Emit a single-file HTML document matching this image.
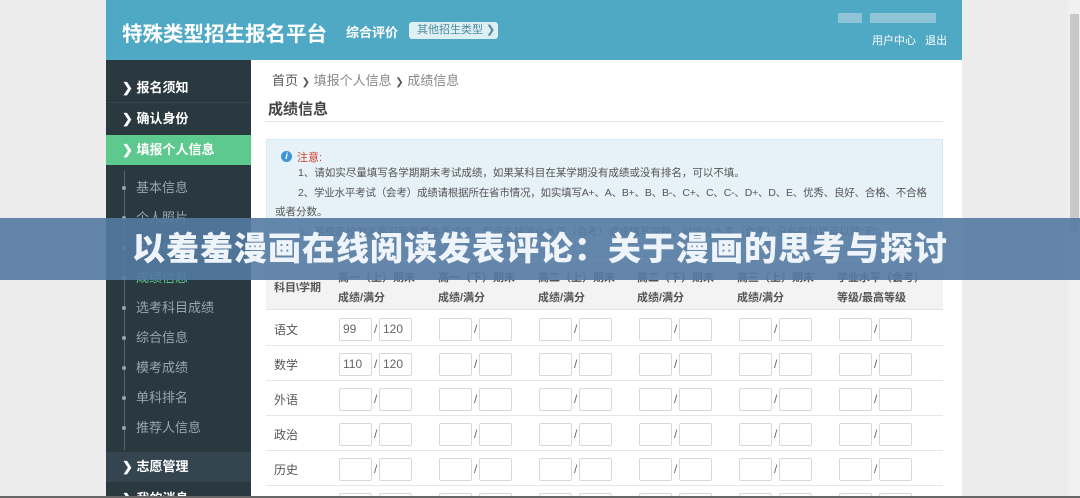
<!DOCTYPE html>
<html style="height:498px;overflow:hidden"><head><meta charset="utf-8"><style>
*{margin:0;padding:0;box-sizing:border-box}
body{width:1080px;height:498px;overflow:hidden;background:#ececec;font-family:"Liberation Sans","Noto Sans CJK SC",sans-serif;position:relative;color:#555}
.a{position:absolute}
.hdr{left:106px;top:0;width:856px;height:60px;background:#4fa9c4}
.side{left:106px;top:60px;width:145px;height:438px;background:#2a3840}
.main{left:251px;top:60px;width:711px;height:438px;background:#fff}
.nav{left:106px;width:145px;height:30px;color:#fff;font-weight:bold;font-size:13px;line-height:30px;padding-left:16px}
.sub{left:106px;width:145px;color:#9aa6ad;font-size:13px;line-height:20px;padding-left:30px}
.dot{position:absolute;left:16px;top:8px;width:4px;height:4px;border-radius:2px;background:#9aa6ad}
.inp{position:absolute;width:33px;height:23px;border:1px solid #d8d8d8;border-radius:2px;background:#fff;font-size:12px;line-height:21px;padding-left:3px;color:#666}
.sl{position:absolute;font-size:12px;color:#666}
.th{position:absolute;font-size:11px;font-weight:bold;color:#555;line-height:20px}
.rowl{position:absolute;left:274px;font-size:12px;color:#555}
</style></head><body>
<div class="a hdr"></div>
<div class="a" style="left:122px;top:17px;color:#fff;font-size:20.5px;font-weight:bold;white-space:nowrap">特殊类型招生报名平台</div>
<div class="a" style="left:346px;top:22px;color:#fff;font-size:13px;font-weight:bold">综合评价</div>
<div class="a" style="left:409px;top:22px;width:89px;height:17px;background:#dff0f5;border-radius:3px;font-size:11px;color:#4a8aa0;line-height:17px;padding-left:8px;white-space:nowrap">其他招生类型 ❯</div>
<div class="a" style="left:838px;top:13px;width:24px;height:10px;background:#8fc4d6"></div>
<div class="a" style="left:870px;top:13px;width:66px;height:10px;background:#8fc4d6"></div>
<div class="a" style="left:872px;top:32px;color:#fff;font-size:11px">用户中心&nbsp;&nbsp;&nbsp;退出</div>

<div class="a side"></div>
<div class="a nav" style="top:73px;border-bottom:1px solid #344650">❯ 报名须知</div>
<div class="a nav" style="top:104px">❯ 确认身份</div>
<div class="a nav" style="top:135px;background:#5ec98e">❯ 填报个人信息</div>
<div class="a" style="left:124px;top:170px;width:1px;height:280px;background:#55636b"></div>
<div class="a sub" style="top:178px"><i class="dot"></i>基本信息</div>
<div class="a sub" style="top:208px"><i class="dot"></i>个人照片</div>
<div class="a sub" style="top:238px"><i class="dot"></i>户籍信息</div>
<div class="a sub" style="top:268px;color:#5ec98e"><i class="dot"></i>成绩信息</div>
<div class="a sub" style="top:298px"><i class="dot"></i>选考科目成绩</div>
<div class="a sub" style="top:328px"><i class="dot"></i>综合信息</div>
<div class="a sub" style="top:358px"><i class="dot"></i>模考成绩</div>
<div class="a sub" style="top:388px"><i class="dot"></i>单科排名</div>
<div class="a sub" style="top:418px"><i class="dot"></i>推荐人信息</div>
<div class="a nav" style="top:452px;background:#34454f">❯ 志愿管理</div>
<div class="a nav" style="top:484px">❯ 我的消息</div>

<div class="a main"></div>
<div class="a" style="left:272px;top:70px;font-size:13px;color:#555">首页 <span style="font-size:10px">❯</span> <span style="color:#888">填报个人信息</span> <span style="font-size:10px">❯</span> <span style="color:#888">成绩信息</span></div>
<div class="a" style="left:268px;top:98px;font-size:15px;font-weight:bold;color:#444">成绩信息</div>
<div class="a" style="left:265px;top:121px;width:678px;height:1px;background:#e5e5e5"></div>
<div class="a" style="left:266px;top:139px;width:677px;height:118px;background:#e6f1f8;border:1px solid #d8e8f2"></div>
<div class="a" style="left:281px;top:151px;width:11px;height:11px;border-radius:6px;background:#3c96d8;color:#fff;font-size:9px;line-height:11px;text-align:center;font-style:italic;font-weight:bold">i</div>
<div class="a" style="left:297px;top:149px;font-size:11px;color:#d2432d">注意:</div>
<div class="a" style="left:275px;top:164px;font-size:10.5px;color:#555;line-height:19.5px;width:670px;white-space:nowrap">
<div style="padding-left:23px">1、请如实尽量填写各学期期末考试成绩，如果某科目在某学期没有成绩或没有排名，可以不填。</div>
<div style="padding-left:23px;letter-spacing:-0.2px">2、学业水平考试（会考）成绩请根据所在省市情况，如实填写A+、A、B+、B、B-、C+、C、C-、D+、D、E、优秀、良好、合格、不合格</div>
<div>或者分数。</div>
<div style="padding-left:23px">3、某些高校的志愿可能需要会考成绩。您可先将学业水平（会考）成绩填写完整，对学业水平（会考）没有的科目可以填“无”。</div>
</div>
<div class="a" style="left:266px;top:262px;width:677px;height:48px;background:#f3f3f3;border-bottom:1px solid #e3e3e3"></div>
<div class="th" style="left:274px;top:278px">科目\学期</div>
<div class="th" style="left:338px;top:268px">高一（上）期末<br>成绩/满分</div>
<div class="th" style="left:438px;top:268px">高一（下）期末<br>成绩/满分</div>
<div class="th" style="left:538px;top:268px">高二（上）期末<br>成绩/满分</div>
<div class="th" style="left:637px;top:268px">高二（下）期末<br>成绩/满分</div>
<div class="th" style="left:737px;top:268px">高三（上）期末<br>成绩/满分</div>
<div class="th" style="left:837px;top:268px">学业水平（会考）<br>等级/最高等级</div>
<div id="rows"></div>
<script>
var subs=["语文","数学","外语","政治","历史",""],h="";
for(var r=0;r<6;r++){var y=310+r*35;
h+='<div class="a" style="left:266px;top:'+(y+35)+'px;width:677px;height:1px;background:#e6e6e6"></div>';
h+='<div class="rowl" style="top:'+(y+11)+'px">'+subs[r]+'</div>';
for(var c=0;c<6;c++){var x=339+c*100;
var v1=(c==0&&r==0)?"99":(c==0&&r==1)?"110":"",v2=(c==0&&r<2)?"120":"";
h+='<div class="inp" style="left:'+x+'px;top:'+(y+8)+'px">'+v1+'</div><span class="sl" style="left:'+(x+35)+'px;top:'+(y+12)+'px">/</span><div class="inp" style="left:'+(x+40)+'px;top:'+(y+8)+'px">'+v2+'</div>';}}
document.getElementById("rows").innerHTML=h;
</script>
<div class="a" style="left:1068px;top:0;width:12px;height:498px;background:#f0f0f0"></div>
<div class="a" style="left:1070px;top:14px;width:9px;height:218px;background:#c8c8c8"></div>
<div class="a" style="left:0;top:496px;width:1080px;height:2px;background:#666"></div>
<div class="a" style="left:0;top:218px;width:1080px;height:62px;background:rgba(84,122,162,0.9)"></div>
<div class="a" style="left:0;top:226px;width:1080px;text-align:center;color:#eef4fa;font-size:33px;font-weight:900;letter-spacing:1px;line-height:46px;white-space:nowrap">以羞羞漫画在线阅读发表评论：关于漫画的思考与探讨</div>
</body></html>
